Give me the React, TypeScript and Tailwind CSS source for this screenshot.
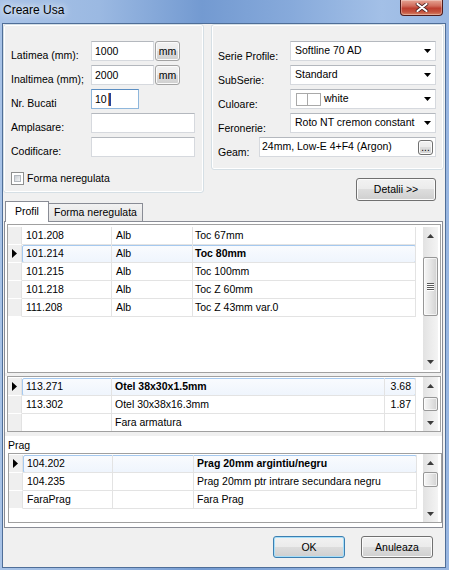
import React from "react";
import clsx from "clsx";

interface Col {
  width: string;
  pad: string;
  right?: boolean;
}

const Win7Button: React.FC<{ className?: string; primary?: boolean; children: React.ReactNode }> = ({
  className,
  primary,
  children,
}) => (
  <button
    type="button"
    className={clsx(
      "flex items-center justify-center rounded-[3px] border text-[10.5px] leading-[13px] text-black bg-[linear-gradient(180deg,#f2f2f2_0%,#ebebeb_49%,#dddddd_50%,#cfcfcf_100%)]",
      primary ? "border-[#3c7fb1] shadow-[inset_0_0_0_1px_#a6def9]" : "border-[#707070] shadow-[inset_0_0_0_1px_#fbfbfb]",
      className
    )}
  >
    {children}
  </button>
);

const TextBox: React.FC<{ className?: string; children?: React.ReactNode }> = ({ className, children }) => (
  <div
    className={clsx(
      "h-[20px] border border-[#d6d9de] border-t-[#b4b8be] bg-white pl-[3px] text-[10.5px] leading-[18px] whitespace-nowrap",
      className
    )}
  >
    {children}
  </div>
);

const Label: React.FC<{ className: string; children: React.ReactNode }> = ({ className, children }) => (
  <div className={clsx("shrink-0 mt-[7px] text-[10.5px] leading-[14px] whitespace-nowrap", className)}>{children}</div>
);

const Arrow: React.FC<{ up?: boolean }> = ({ up }) => (
  <svg width="7" height="4" viewBox="0 0 7 4">
    <path d={up ? "M0 4L3.5 0L7 4Z" : "M0 0L7 0L3.5 4Z"} fill="#3c3c3c" />
  </svg>
);

const Combo: React.FC<{ children: React.ReactNode }> = ({ children }) => (
  <div className="w-[146px] h-[20px] border border-[#d6d9de] border-t-[#b4b8be] bg-white flex items-center pl-[4px] pr-[4px] text-[10.5px] whitespace-nowrap">
    <div className="flex-1 flex items-center overflow-hidden">{children}</div>
    <svg width="7" height="4" viewBox="0 0 7 4" className="shrink-0">
      <path d="M0 0L7 0L3.5 4Z" fill="#000" />
    </svg>
  </div>
);

const ScrollBar: React.FC<{ className: string; gap: string; thumb: string; grip?: boolean }> = ({
  className,
  gap,
  thumb,
  grip,
}) => (
  <div
    className={clsx(
      "w-[15px] flex flex-col bg-[linear-gradient(90deg,#e2e2e2,#f4f4f4)] shrink-0",
      className
    )}
  >
    <div className="h-[17px] flex items-center justify-center shrink-0">
      <Arrow up />
    </div>
    <div className={clsx("shrink-0", gap)} />
    <div
      className={clsx(
        "shrink-0 rounded-[2px] border border-[#979797] bg-[linear-gradient(90deg,#f7f7f7,#e6e6e6_50%,#d2d2d2)] shadow-[inset_0_0_0_1px_#ffffffa0] flex flex-col items-center justify-center gap-[1px]",
        thumb
      )}
    >
      {grip &&
        [0, 1, 2, 3].map((i) => <div key={i} className="w-[7px] h-[1px] bg-[#5a5a5a] shadow-[0_1px_0_#fff]" />)}
    </div>
    <div className="flex-1" />
    <div className="h-[17px] flex items-center justify-center shrink-0">
      <Arrow />
    </div>
  </div>
);

const GridRow: React.FC<{ cells: string[]; cols: Col[]; active?: boolean; boldCol: number }> = ({
  cells,
  cols,
  active,
  boldCol,
}) => (
  <div className="flex h-[18px]">
    <div className="w-[14px] shrink-0 bg-[#efefef] border-b border-r border-b-white border-r-[#e2e2e2] flex items-center justify-center">
      {active && (
        <svg width="5" height="9" viewBox="0 0 5 9">
          <path d="M0 0L5 4.5L0 9Z" fill="#000" />
        </svg>
      )}
    </div>
    <div className="relative flex">
      {active && (
        <div className="absolute inset-0 rounded-[2px] border border-[#a5c9ef] bg-[linear-gradient(180deg,#f9fbfe,#eff5fd)]" />
      )}
      {cols.map((c, i) => (
        <div
          key={i}
          className={clsx(
            "relative shrink-0 overflow-hidden whitespace-nowrap border-r border-b border-[#e3e3e3] text-[10.5px] leading-[17px]",
            c.width,
            c.pad,
            c.right && "text-right",
            active && i === boldCol && "font-bold"
          )}
        >
          {cells[i]}
        </div>
      ))}
    </div>
  </div>
);

const grid1Cols: Col[] = [
  { width: "w-[90px]", pad: "pl-[4px]" },
  { width: "w-[81px]", pad: "pl-[4px]" },
  { width: "w-[223px]", pad: "pl-[2px]" },
];

const grid2Cols: Col[] = [
  { width: "w-[90px]", pad: "pl-[4px]" },
  { width: "w-[273px]", pad: "pl-[3px]" },
  { width: "w-[31px]", pad: "pr-[4px]", right: true },
];

const grid3Cols: Col[] = [
  { width: "w-[90px]", pad: "pl-[4px]" },
  { width: "w-[81px]", pad: "pl-[4px]" },
  { width: "w-[223px]", pad: "pl-[3px]" },
];

const profile = [
  ["101.208", "Alb", "Toc 67mm"],
  ["101.214", "Alb", "Toc 80mm"],
  ["101.215", "Alb", "Toc 100mm"],
  ["101.218", "Alb", "Toc Z 60mm"],
  ["111.208", "Alb", "Toc Z 43mm var.0"],
];

const armatura = [
  ["113.271", "Otel 38x30x1.5mm", "3.68"],
  ["113.302", "Otel 30x38x16.3mm", "1.87"],
  ["", "Fara armatura", ""],
];

const praguri = [
  ["104.202", "", "Prag 20mm argintiu/negru"],
  ["104.235", "", "Prag 20mm ptr intrare secundara negru"],
  ["FaraPrag", "", "Fara Prag"],
];

export default function App() {
  return (
    <div className="w-[449px] h-[570px] flex flex-col overflow-hidden font-['Liberation_Sans',Arial,sans-serif] text-black bg-[linear-gradient(90deg,#a8c3e7_0%,#9bb9e2_22%,#739ad1_45%,#87aadb_65%,#a3c0e7_85%,#98b6e1_100%)]">
      {/* title bar */}
      <div className="h-[23px] shrink-0 flex items-start justify-between pl-[3px] pr-[6px]">
        <span className="mt-[3px] text-[12px] leading-[15px] [text-shadow:0_0_6px_#ffffff,0_0_10px_#ffffffc0]">
          Creare Usa
        </span>
        <div className="w-[43px] h-[16px] rounded-b-[4px] border border-t-0 border-[#4f1b1b] bg-[linear-gradient(180deg,#e6a494_0%,#d06b5b_40%,#bd3e2f_55%,#c5543f_80%,#d7876a_100%)] shadow-[inset_0_0_0_1px_#ffffff50] flex items-center justify-center">
          <svg width="14" height="9" viewBox="0 0 14 9">
            <path d="M2.5 1L11.5 8M11.5 1L2.5 8" stroke="#4a2222" strokeWidth="3.6" strokeLinecap="round" />
            <path d="M2.5 1L11.5 8M11.5 1L2.5 8" stroke="#ffffff" strokeWidth="2.1" strokeLinecap="round" />
          </svg>
        </div>
      </div>

      {/* client */}
      <div className="flex-1 ml-[2px] mr-[3px] mb-[2px] border border-[#4f6e98] bg-[#f0f0f0] flex flex-col">
        {/* top section */}
        <div className="flex items-start h-[177px] shrink-0">
          <div className="w-[201px] h-[169px] shrink-0 rounded-[3px] border border-[#d5dfe5] shadow-[inset_0_0_0_1px_#ffffff] pt-[16px] pl-[7px] flex flex-col gap-[4px]">
            <div className="flex h-[20px]">
              <Label className="w-[80px]">Latimea (mm):</Label>
              <TextBox className="w-[63px]">1000</TextBox>
              <Win7Button className="ml-[1px] w-[25px] h-[20px] !border-[#a3a3a3]">mm</Win7Button>
            </div>
            <div className="flex h-[20px]">
              <Label className="w-[80px]">Inaltimea (mm);</Label>
              <TextBox className="w-[63px]">2000</TextBox>
              <Win7Button className="ml-[1px] w-[25px] h-[20px] !border-[#a3a3a3]">mm</Win7Button>
            </div>
            <div className="flex h-[20px]">
              <Label className="w-[80px]">Nr. Bucati</Label>
              <div className="w-[48px] h-[20px] border border-[#8fb7dc] border-t-[#5b8ec2] bg-white pl-[3px] text-[10.5px] leading-[18px] flex items-center">
                <span>10</span>
                <span className="ml-[1px] w-[3px] h-[13px] bg-[#26449a] border-l border-[#e98a2a]" />
              </div>
            </div>
            <div className="flex h-[20px]">
              <Label className="w-[80px]">Amplasare:</Label>
              <TextBox className="w-[104px]" />
            </div>
            <div className="flex h-[20px]">
              <Label className="w-[80px]">Codificare:</Label>
              <TextBox className="w-[104px]" />
            </div>
            <div className="mt-[10px] flex items-center gap-[3px]">
              <div className="w-[13px] h-[13px] border border-[#8e8f8f] bg-white p-[2px]">
                <div className="w-full h-full border border-[#b3b8be] bg-[linear-gradient(135deg,#c9ced4,#f4f5f6)]" />
              </div>
              <span className="text-[10.5px] leading-[14px]">Forma neregulata</span>
            </div>
          </div>

          <div className="flex-1 ml-[7px] mr-[1px] flex flex-col items-end">
            <div className="w-full h-[146px] rounded-[3px] border border-[#d5dfe5] shadow-[inset_0_0_0_1px_#ffffff] pt-[16px] pl-[6px] flex flex-col gap-[4px]">
              <div className="flex h-[20px]">
                <Label className="w-[72px] mt-[8px]">Serie Profile:</Label>
                <Combo>Softline 70 AD</Combo>
              </div>
              <div className="flex h-[20px]">
                <Label className="w-[72px] mt-[8px]">SubSerie:</Label>
                <Combo>Standard</Combo>
              </div>
              <div className="flex h-[20px]">
                <Label className="w-[72px] mt-[8px]">Culoare:</Label>
                <Combo>
                  <span className="ml-[1px] w-[12px] h-[13px] border border-[#a9a9a9] bg-white" />
                  <span className="w-[13px] h-[13px] border border-l-0 border-[#a9a9a9] bg-white" />
                  <span className="ml-[3px]">white</span>
                </Combo>
              </div>
              <div className="flex h-[20px]">
                <Label className="w-[72px] mt-[8px]">Feronerie:</Label>
                <Combo>Roto NT cremon constant</Combo>
              </div>
              <div className="flex h-[20px]">
                <Label className="w-[41px] mt-[8px]">Geam:</Label>
                <div className="w-[177px] h-[20px] border border-[#d6d9de] border-t-[#b4b8be] bg-white pl-[2px] pr-[2px] flex items-center text-[10.5px] whitespace-nowrap">
                  <span className="flex-1">24mm, Low-E 4+F4 (Argon)</span>
                  <Win7Button className="w-[15px] h-[15px] rounded-[3px] !items-end pb-[2px] !text-[10px] !leading-[8px]">...</Win7Button>
                </div>
              </div>
            </div>
            <Win7Button className="mt-[8px] mr-[8px] w-[80px] h-[23px]">Detalii &gt;&gt;</Win7Button>
          </div>
        </div>

        {/* tabs */}
        <div className="h-[20px] shrink-0 flex items-end pl-[2px] relative z-10">
          <div className="w-[44px] h-[21px] -mb-[1px] border border-b-0 border-[#898c95] bg-white flex items-center justify-center text-[10.5px] pb-[1px]">
            Profil
          </div>
          <div className="w-[94px] h-[18px] border border-l-0 border-b-0 border-[#898c95] bg-[linear-gradient(180deg,#f2f2f2,#e3e3e3)] flex items-center justify-center text-[10.5px]">
            Forma neregulata
          </div>
        </div>

        {/* tab page */}
        <div className="h-[307px] shrink-0 ml-[1px] mr-[2px] border border-[#898c95] bg-white flex flex-col">
          <div className="mt-[2px] ml-[2px] mr-[1px] h-[149px] shrink-0 border border-[#a0a0a0] bg-white flex overflow-hidden">
            <div className="pt-[2px] flex flex-col">
              {profile.map((r, i) => (
                <GridRow key={i} cells={r} cols={grid1Cols} active={i === 1} boldCol={2} />
              ))}
            </div>
            <ScrollBar className="ml-auto mr-[2px] my-[2px]" gap="h-[13px]" thumb="h-[59px]" grip />
          </div>

          <div className="h-[3px] shrink-0 bg-[#f0f0f0]" />

          <div className="ml-[2px] mr-[1px] h-[56px] shrink-0 border border-[#a0a0a0] bg-white flex overflow-hidden">
            <div className="pt-[1px] flex flex-col">
              {armatura.map((r, i) => (
                <GridRow key={i} cells={r} cols={grid2Cols} active={i === 0} boldCol={1} />
              ))}
            </div>
            <ScrollBar className="ml-auto mr-[2px] my-[0px]" gap="h-[3px]" thumb="h-[14px]" />
          </div>

          <div className="h-[4px] shrink-0 bg-[#f0f0f0]" />

          <div className="flex-1 flex flex-col">
            <div className="pl-[3px] pt-[2px] text-[10.5px] leading-[14px]">Prag</div>
            <div className="mt-[1px] ml-[3px] h-[70px] shrink-0 border border-[#a0a0a0] bg-white flex overflow-hidden">
              <div className="pt-[1px] flex flex-col">
                {praguri.map((r, i) => (
                  <GridRow key={i} cells={r} cols={grid3Cols} active={i === 0} boldCol={2} />
                ))}
              </div>
              <ScrollBar className="ml-auto mr-[3px] my-[0px]" gap="h-[1px]" thumb="h-[15px]" />
            </div>
          </div>
        </div>

        {/* buttons */}
        <div className="mt-[8px] flex justify-end gap-[16px] pr-[12px]">
          <Win7Button primary className="w-[72px] h-[22px]">
            OK
          </Win7Button>
          <Win7Button className="w-[72px] h-[22px]">Anuleaza</Win7Button>
        </div>
      </div>
    </div>
  );
}
